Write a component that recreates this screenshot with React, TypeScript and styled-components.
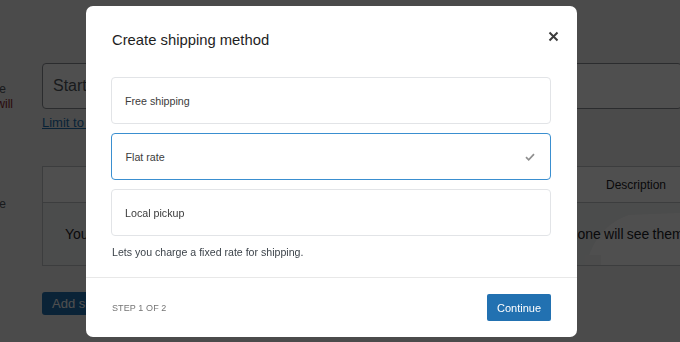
import styled, { createGlobalStyle } from 'styled-components'

const GlobalStyle = createGlobalStyle`
	html, body {
		margin: 0;
		padding: 0;
		width: 680px;
		height: 342px;
		overflow: hidden;
		background: #f0f0f1;
		font-family: 'Liberation Sans', Arial, sans-serif;
	}
	* {
		box-sizing: border-box;
	}
`

// Page behind the dialog
const Page = styled.div`
	display: flex;
	flex-direction: column;
	padding-top: 63px;
	width: 680px;
	height: 342px;
	overflow: hidden;
`

const FormRow = styled.div<{ $top?: number }>`
	display: flex;
	margin-top: ${(p) => p.$top || 0}px;
`

const LabelColumn = styled.div<{ $pad?: number }>`
	width: 42px;
	flex-shrink: 0;
	overflow: hidden;
	padding-top: ${(p) => p.$pad || 0}px;
	font-size: 12px;
	line-height: 15px;
	color: #50575e;
`

const LabelLine = styled.div<{ $end: number; $warn?: boolean }>`
	display: flex;
	justify-content: flex-end;
	width: ${(p) => p.$end}px;
	white-space: nowrap;
	color: ${(p) => (p.$warn ? '#8a2424' : '#50575e')};
`

const MainColumn = styled.div`
	flex: 1;
	min-width: 0;
	display: flex;
	flex-direction: column;
	align-items: flex-start;
`

const RegionInput = styled.div`
	width: 640px;
	height: 46px;
	border: 1px solid #8c8f94;
	border-radius: 4px;
	background: #fff;
	display: flex;
	align-items: center;
	padding-left: 10px;
	font-size: 16px;
	color: #50575e;
	white-space: nowrap;
`

const LimitLink = styled.a`
	margin-top: 6px;
	font-size: 13px;
	line-height: 15px;
	color: #2271b1;
	text-decoration: underline;
	white-space: nowrap;
`

const MethodsTable = styled.div`
	width: 680px;
	border: 1px solid #c3c4c7;
	background: #fff;
`

const TableHead = styled.div`
	display: grid;
	grid-template-columns: 1fr 170px;
	height: 36px;
	border-bottom: 1px solid #c3c4c7;
	font-size: 12px;
	color: #1d2327;
`

const HeadCell = styled.div`
	display: flex;
	align-items: center;
	justify-content: center;
`

const TableBody = styled.div`
	position: relative;
	height: 62px;
	display: flex;
	align-items: center;
	padding-left: 22px;
	background: #f3f4f4;
	font-size: 14px;
	word-spacing: -0.7px;
	color: #1d2327;
	white-space: nowrap;
	overflow: hidden;
`

const EmptyText = styled.span`
	position: relative;
	z-index: 1;
`

const Watermark = styled.svg`
	position: absolute;
	left: 540px;
	top: 6px;
`

const AddButton = styled.div`
	margin-top: 26px;
	height: 23px;
	padding: 0 10px;
	border-radius: 3px;
	background: #2271b1;
	color: #fff;
	font-size: 13px;
	display: flex;
	align-items: center;
	white-space: nowrap;
`

// Dialog
const Overlay = styled.div`
	position: fixed;
	inset: 0;
	z-index: 100;
	background: rgba(0, 0, 0, 0.69);
	display: flex;
	align-items: flex-start;
	padding: 6px 0 0 86px;
`

const Modal = styled.div`
	width: 491px;
	height: 331px;
	background: #fff;
	border-radius: 7px;
	display: flex;
	flex-direction: column;
`

const ModalBody = styled.div`
	padding: 24px 18px 18px 25px;
	display: flex;
	flex-direction: column;
`

const ModalHeader = styled.div`
	display: flex;
	justify-content: space-between;
	align-items: flex-start;
`

const Title = styled.h1`
	margin: 0 0 0 1px;
	font-size: 14.8px;
	line-height: 20px;
	font-weight: 400;
	color: #1e1e1e;
`

const CloseButton = styled.div`
	width: 12px;
	height: 12px;
	display: flex;
	align-items: center;
	justify-content: center;
`

const OptionList = styled.div`
	margin-top: 27px;
	width: 440px;
	display: flex;
	flex-direction: column;
	gap: 9px;
`

const Option = styled.div<{ $selected?: boolean }>`
	height: 47px;
	border: ${(p) => (p.$selected ? '1.5px solid #3a8fd0' : '1px solid #e2e4e7')};
	border-radius: 4px;
	display: flex;
	align-items: center;
	justify-content: space-between;
	padding: 0 15px 0 ${(p) => (p.$selected ? 13.5 : 13)}px;
	font-size: 10.7px;
	color: #3c3c3c;
`

const Hint = styled.p`
	margin: 10px 0 0 1px;
	font-size: 10.6px;
	line-height: 13px;
	color: #3c434a;
`

const ModalFooter = styled.div`
	flex: 1;
	border-top: 1px solid #e8e8e8;
	display: flex;
	align-items: center;
	justify-content: space-between;
	padding: 0 26px 0 26px;
`

const StepLabel = styled.span`
	font-size: 9px;
	color: #757575;
	letter-spacing: 0.1px;
`

const ContinueButton = styled.button`
	width: 64px;
	height: 27px;
	border: none;
	border-radius: 2px;
	background: #2271b1;
	color: #fff;
	font-family: inherit;
	font-size: 11px;
	padding: 0;
`

const options = [
	{ name: 'Free shipping' },
	{ name: 'Flat rate', selected: true },
	{ name: 'Local pickup' },
]

function App() {
	return (
		<>
			<GlobalStyle />
			<Page>
				{/* Zone regions */}
				<FormRow>
					<LabelColumn $pad={19}>
						<LabelLine $end={6}>List the regions you'd like to include in your shipping zone</LabelLine>
						<LabelLine $end={13} $warn>
							Customers who match these regions will
						</LabelLine>
					</LabelColumn>
					<MainColumn>
						<RegionInput>Start typing to pick regions</RegionInput>
						<LimitLink>Limit to specific ZIP/postcodes</LimitLink>
					</MainColumn>
				</FormRow>
				{/* Shipping methods */}
				<FormRow $top={36}>
					<LabelColumn $pad={31}>
						<LabelLine $end={6}>Add the shipping methods you'd like to make available to customers in this zone</LabelLine>
					</LabelColumn>
					<MainColumn>
						<MethodsTable>
							<TableHead>
								<HeadCell />
								<HeadCell>Description</HeadCell>
							</TableHead>
							<TableBody>
								<EmptyText>
									You can add multiple shipping methods within this zone. Only customers within the zone will see them.
								</EmptyText>
								<Watermark width="160" height="62" viewBox="0 0 160 62">
									<path
										d="M2 62 C8 30 24 14 46 6 L100 4 L150 40 L120 62 Z"
										fill="#ffffff"
									/>
									<path d="M2 62 L2 46 L18 46 L18 62 Z" fill="#f6f6f6" />
								</Watermark>
							</TableBody>
						</MethodsTable>
						<AddButton>Add shipping method</AddButton>
					</MainColumn>
				</FormRow>
			</Page>

			<Overlay>
				<Modal>
					<ModalBody>
						<ModalHeader>
							<Title>Create shipping method</Title>
							<CloseButton>
								<svg width="11" height="11" viewBox="0 0 11 11">
									<path d="M1.5 1.5 L9.5 9.5 M9.5 1.5 L1.5 9.5" stroke="#3c3c3c" strokeWidth="2" />
								</svg>
							</CloseButton>
						</ModalHeader>
						<OptionList>
							{options.map((o) => (
								<Option key={o.name} $selected={o.selected}>
									{o.name}
									{o.selected && (
										<svg width="10" height="8" viewBox="0 0 10 8">
											<path d="M1 4.2 L3.7 6.8 L9 1.2" stroke="#8f8f8f" strokeWidth="1.7" fill="none" />
										</svg>
									)}
								</Option>
							))}
						</OptionList>
						<Hint>Lets you charge a fixed rate for shipping.</Hint>
					</ModalBody>
					<ModalFooter>
						<StepLabel>STEP 1 OF 2</StepLabel>
						<ContinueButton>Continue</ContinueButton>
					</ModalFooter>
				</Modal>
			</Overlay>
		</>
	)
}

export default App
